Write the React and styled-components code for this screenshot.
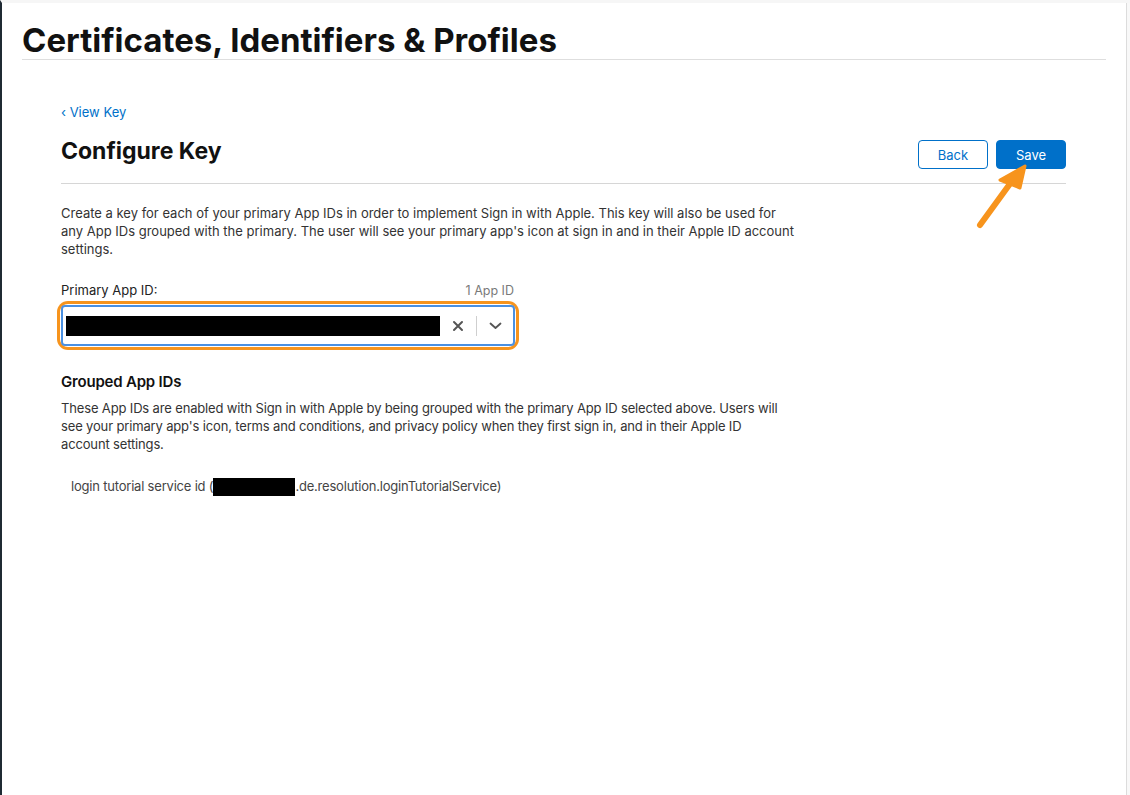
import React from 'react';
import styled, { createGlobalStyle } from 'styled-components';

const GlobalStyle = createGlobalStyle`
  html, body {
    margin: 0;
    padding: 0;
    background: #fff;
  }
  body {
    font-family: Inter, "Liberation Sans", sans-serif;
    color: #333;
    -webkit-font-smoothing: antialiased;
  }
`;

const Frame = styled.div`
  position: relative;
  width: 1130px;
  height: 795px;
  box-sizing: border-box;
  border-top: 3px solid #f6f6f6;
  border-left: 2px solid #1f2a33;
  display: flex;
  overflow: hidden;
`;

const Page = styled.div`
  flex: 1;
  display: flex;
  flex-direction: column;
`;

const Gutter = styled.div`
  width: 3px;
  border-left: 1px solid #dcdcdc;
  background: #f8f8f8;
`;

const Masthead = styled.header`
  margin: 0 20px 0 20px;
  padding-top: 19px;
  border-bottom: 1px solid #dedede;
`;

const SiteTitle = styled.h1`
  margin: 0;
  font-size: 33px;
  line-height: 36px;
  font-weight: 700;
  color: #111;
  padding-bottom: 1px;
`;

const Content = styled.main`
  margin: 0 60px 0 59px;
  padding-top: 41px;
`;

const BackLink = styled.a`
  display: inline-block;
  font-size: 13px;
  line-height: 16px;
  color: #0070c9;
  text-decoration: none;
`;

const HeadRow = styled.div`
  display: flex;
  align-items: flex-start;
  justify-content: space-between;
  margin-top: 11px;
  padding-bottom: 14px;
  border-bottom: 1px solid #d6d6d6;
`;

const PageTitle = styled.h2`
  margin: 0;
  padding-top: 3px;
  font-size: 23px;
  line-height: 32px;
  font-weight: 700;
  color: #111;
`;

const Actions = styled.div`
  display: flex;
  gap: 8px;
  margin-top: 8px;
`;

const Button = styled.button`
  width: 70px;
  height: 29px;
  border-radius: 4px;
  font-family: inherit;
  font-size: 13px;
  border: 1px solid #0070c9;
  background: ${(p) => (p.$primary ? '#0070c9' : '#fff')};
  color: ${(p) => (p.$primary ? '#fff' : '#0070c9')};
  cursor: pointer;
`;

const Paragraph = styled.p`
  margin: ${(p) => p.$margin || '0'};
  max-width: 760px;
  font-size: 13px;
  line-height: 18px;
  color: #333;
  letter-spacing: ${(p) => (p.$tight ? '-0.15px' : '0')};
`;

const FieldHead = styled.div`
  width: 454px;
  display: flex;
  justify-content: space-between;
  align-items: baseline;
  margin-top: 24px;
`;

const Label = styled.label`
  font-size: 13px;
  line-height: 16px;
  color: #222;
`;

const Count = styled.span`
  font-size: 12.5px;
  color: #7a7a7a;
  margin-right: 1px;
`;

const SelectRing = styled.div`
  width: 454px;
  margin-top: 7px;
  border-radius: 7px;
  box-shadow: 0 0 0 1px #fff, 0 0 0 4px #f7941d;
`;

const Select = styled.div`
  box-sizing: border-box;
  height: 41px;
  display: flex;
  align-items: center;
  border: 2px solid #4a90e2;
  border-radius: 4px;
  padding-left: 3px;
`;

const Redacted = styled.span`
  display: inline-block;
  background: #000;
  width: ${(p) => p.$w}px;
  height: ${(p) => p.$h}px;
  vertical-align: middle;
`;

const Indicator = styled.span`
  width: 36px;
  display: flex;
  align-items: center;
  justify-content: center;
  color: #555;
`;

const Separator = styled.span`
  width: 1px;
  height: 20px;
  background: #cfcfcf;
`;

const SectionTitle = styled.h3`
  margin: 26px 0 0;
  font-size: 15px;
  line-height: 20px;
  font-weight: 600;
  color: #111;
  letter-spacing: -0.2px;
`;

const ItemList = styled.ul`
  list-style: none;
  margin: 24px 0 0;
  padding: 0 0 0 10px;
`;

const Item = styled.li`
  font-size: 13px;
  line-height: 18px;
  color: #444;
  letter-spacing: -0.2px;
`;

const Arrow = styled.svg`
  position: absolute;
  left: 970px;
  top: 152px;
`;

export default function App() {
  return (
    <>
      <GlobalStyle />
      <Frame>
        <Page>
          <Masthead>
            <SiteTitle>Certificates, Identifiers &amp; Profiles</SiteTitle>
          </Masthead>
          <Content>
            <BackLink href="#">‹ View Key</BackLink>
            <HeadRow>
              <PageTitle>Configure Key</PageTitle>
              <Actions>
                <Button>Back</Button>
                <Button $primary>Save</Button>
              </Actions>
            </HeadRow>
            <Paragraph $margin="20px 0 0">
              Create a key for each of your primary App IDs in order to implement Sign in with Apple. This key will also be used for
              <br />
              any App IDs grouped with the primary. The user will see your primary app's icon at sign in and in their Apple ID account
              <br />
              settings.
            </Paragraph>
            <FieldHead>
              <Label>Primary App ID:</Label>
              <Count>1 App ID</Count>
            </FieldHead>
            <SelectRing>
              <Select>
                <Redacted $w={376} $h={20} />
                <Indicator style={{ marginLeft: 'auto' }}>
                  <svg width="12" height="12" viewBox="0 0 12 12">
                    <path d="M2 2 L10 10 M10 2 L2 10" stroke="#555" strokeWidth="2" strokeLinecap="round" />
                  </svg>
                </Indicator>
                <Separator />
                <Indicator>
                  <svg width="13" height="8" viewBox="0 0 13 8">
                    <path d="M1.5 1.5 L6.5 6 L11.5 1.5" stroke="#555" strokeWidth="1.8" fill="none" strokeLinecap="round" strokeLinejoin="round" />
                  </svg>
                </Indicator>
              </Select>
            </SelectRing>
            <SectionTitle>Grouped App IDs</SectionTitle>
            <Paragraph $margin="7px 0 0" $tight>
              These App IDs are enabled with Sign in with Apple by being grouped with the primary App ID selected above. Users will
              <br />
              see your primary app's icon, terms and conditions, and privacy policy when they first sign in, and in their Apple ID
              <br />
              account settings.
            </Paragraph>
            <ItemList>
              <Item>
                login tutorial service id (<Redacted $w={82} $h={18} />.de.resolution.loginTutorialService)
              </Item>
            </ItemList>
          </Content>
        </Page>
        <Gutter />
        <Arrow width="70" height="80" viewBox="0 0 70 80">
          <path d="M8 70 L40 26" stroke="#f7941d" strokeWidth="6" strokeLinecap="round" />
          <path d="M53 11 L28 25 L48 33 Z" fill="#f7941d" stroke="#f7941d" strokeWidth="3" strokeLinejoin="round" />
        </Arrow>
      </Frame>
    </>
  );
}
